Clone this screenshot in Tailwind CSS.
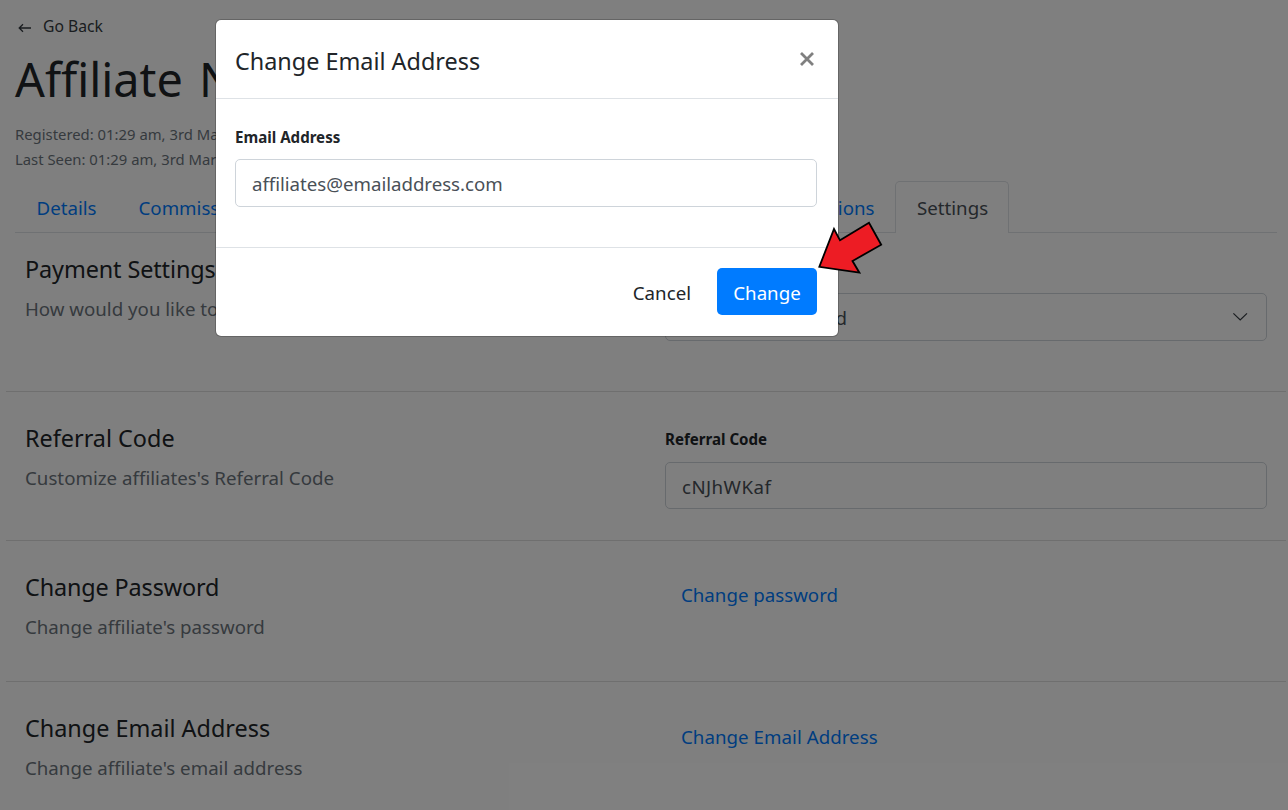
<!DOCTYPE html>
<html lang="en">
<head>
<meta charset="utf-8">
<title>Affiliate Settings</title>
<script src="https://cdn.jsdelivr.net/npm/@tailwindcss/browser@4"></script>
</head>
<body class="relative h-[810px] overflow-hidden bg-white font-['Noto_Sans','Open_Sans',sans-serif] text-[18.7px] leading-[30px] text-[#212529]">
  <header class="h-[181px] pl-[15px] pt-[14px]">
    <a class="flex items-center text-[15.7px] leading-6 text-[#343a40]">
      <svg class="ml-[3px] mr-[11px] mt-[3px]" width="14" height="12" viewBox="0 0 14 12" fill="none" stroke="#343a40" stroke-width="1.3"><path d="M13 6H1.5M5 2.2L1.2 6 5 9.8"/></svg>
      <span>Go Back</span>
    </a>
    <h1 class="mt-[11px] text-[46.8px] leading-[60px] [word-spacing:4px]">Affiliate N</h1>
    <div class="mt-[13px] text-[14.85px] leading-[25px] text-[#6c757d]">
      <p>Registered: 01:29 am, 3rd Mar</p>
      <p>Last Seen: 01:29 am, 3rd Mar</p>
    </div>
  </header>
  <nav class="ml-[15px] flex h-[52px] w-[1262px] border-b border-[#dee2e6] text-[#007bff]">
    <a class="pl-[21.5px] pr-[21px] pt-3">Details</a>
    <a class="pt-3 pl-[21px]">Commissions</a>
    <div class="flex w-0 grow"></div>
    <a class="pr-[20.5px] pt-3">Promotions</a>
    <a class="mr-[268px] h-[52px] w-[114px] rounded-t-[5px] border border-b-0 border-[#dee2e6] bg-white pl-[21px] pt-[11px] text-[#495057]">Settings</a>
  </nav>
  <main class="ml-[6px] w-[1280px]">
    <section class="flex h-[159px] border-b border-[#dfdfdf] pl-[19px] pt-[21px]">
      <div class="w-[640px]">
        <h2 class="text-[23.4px] tracking-[-0.1px]">Payment Settings</h2>
        <p class="mt-[10px] text-[#6c757d]">How would you like to be paid?</p>
      </div>
      <div class="w-[602px]">
        <div class="mt-[4px] text-[15px] font-bold leading-6">Payment Method</div>
        <div class="mt-[11px] flex h-12 items-center justify-between rounded-[5px] border border-[#ced4da] pl-4 pr-[18px] text-[#495057]">
          <span class="pt-[2px]">No option selected</span>
          <svg width="16" height="10" viewBox="0 0 16 10" fill="none" stroke="#343a40" stroke-width="1.2"><path d="M1.4 1.4L8.2 8l6.8-6.6"/></svg>
        </div>
      </div>
    </section>
    <section class="flex h-[149px] border-b border-[#dfdfdf] pl-[19px] pt-[31px]">
      <div class="w-[640px]">
        <h2 class="text-[23.4px]">Referral Code</h2>
        <p class="mt-[10px] tracking-[0.02px] text-[#6c757d]">Customize affiliates's Referral Code</p>
      </div>
      <div class="w-[602px]">
        <div class="mt-[4px] text-[15.1px] font-bold leading-6">Referral Code</div>
        <div class="mt-[11px] flex h-[47px] items-center rounded-[5px] border border-[#ced4da] pl-4 pt-[2px] tracking-[0.45px] text-[#495057]">cNJhWKaf</div>
      </div>
    </section>
    <section class="flex h-[141px] border-b border-[#dfdfdf] pl-[19px] pt-[31px]">
      <div class="w-[640px]">
        <h2 class="text-[23.4px] tracking-[-0.13px]">Change Password</h2>
        <p class="mt-[10px] text-[#6c757d]">Change affiliate's password</p>
      </div>
      <a class="pl-4 pt-2 text-[#007bff]">Change password</a>
    </section>
    <section class="flex pl-[19px] pt-[31px]">
      <div class="w-[640px]">
        <h2 class="text-[23.4px]">Change Email Address</h2>
        <p class="mt-[10px] text-[#6c757d]">Change affiliate's email address</p>
      </div>
      <a class="pl-4 pt-[9px] tracking-[0.04px] text-[#007bff]">Change Email Address</a>
    </section>
  </main>

  <div class="absolute inset-0 bg-black/50"></div>

  <div class="absolute left-[215px] top-[19px] h-[318px] w-[624px] rounded-md border border-black/20 bg-white bg-clip-padding">
    <div class="flex h-[79px] justify-between border-b border-[#dee2e6] pl-[19px] pr-6 pt-[26px]">
      <h2 class="text-[23.4px]">Change Email Address</h2>
      <svg class="mt-[6px]" width="14" height="14" viewBox="0 0 14 14" stroke="#808080" stroke-width="2.8"><path d="M1 1l12 12M13 1L1 13"/></svg>
    </div>
    <div class="h-[148px] px-[19px] pt-[26px]">
      <div class="text-[15.1px] font-bold leading-6">Email Address</div>
      <div class="mt-[10px] flex h-12 w-[582px] items-center rounded-[5px] border border-[#ced4da] pl-4 pt-[2px] tracking-[-0.03px] text-[#495057]">affiliates@emailaddress.com</div>
    </div>
    <div class="flex justify-end border-t border-[#dee2e6] pr-[21px] pt-5">
      <span class="mr-[26px] pt-[10px]">Cancel</span>
      <span class="h-[47px] w-[100px] rounded-[5px] bg-[#007bff] pt-[10px] text-center text-white">Change</span>
    </div>
  </div>

  <svg class="absolute left-[810px] top-[215px]" width="80" height="65" viewBox="810 215 80 65"><path d="M819.3 266.8L834 229l6 11.3L869 222.8l12.2 21.9L852.5 261l6.9 11.7Z" fill="#ed1c24" stroke="#000" stroke-width="1.8"/></svg>
</body>
</html>
